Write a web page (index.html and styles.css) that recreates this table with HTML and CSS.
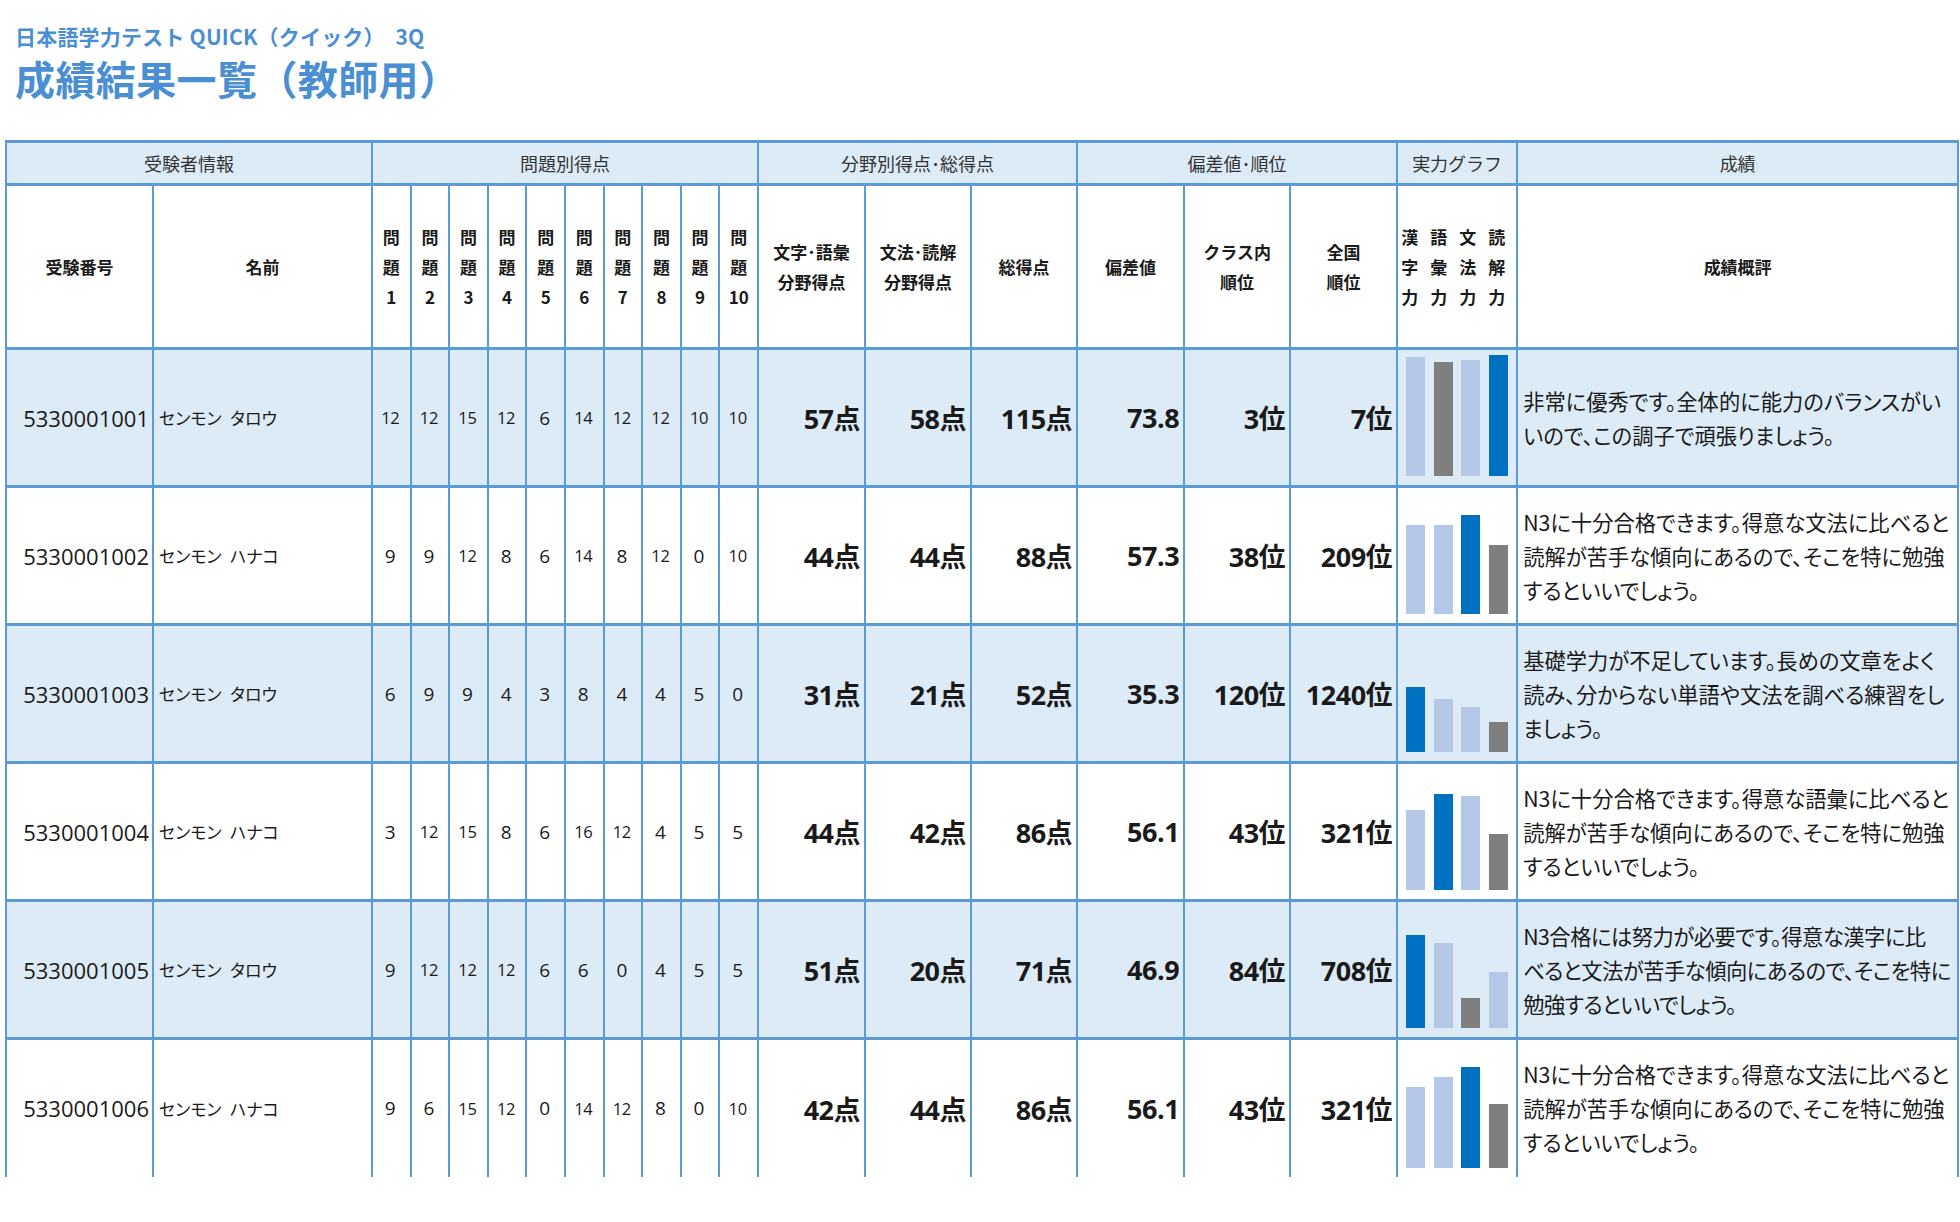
FILE: index.html
```html
<!DOCTYPE html>
<html lang="ja">
<head>
<meta charset="utf-8">
<title>成績結果一覧（教師用）</title>
<link rel="stylesheet" href="styles.css">
</head>
<body>
<header class="titles">
  <div class="subtitle">日本語学力テスト QUICK（クイック）　3Q</div>
  <h1 class="title">成績結果一覧（教師用）</h1>
</header>
<table class="grid">
  <colgroup>
    <col style="width:147px"><col style="width:219px">
    <col style="width:38.6px"><col style="width:38.6px"><col style="width:38.6px"><col style="width:38.6px"><col style="width:38.6px">
    <col style="width:38.6px"><col style="width:38.6px"><col style="width:38.6px"><col style="width:38.6px"><col style="width:38.6px">
    <col style="width:107px"><col style="width:106px"><col style="width:106px">
    <col style="width:107px"><col style="width:106px"><col style="width:107px">
    <col style="width:120px"><col style="width:441px">
  </colgroup>
  <thead>
    <tr class="group">
      <th colspan="2">受験者情報</th>
      <th colspan="10">問題別得点</th>
      <th colspan="3">分野別得点･総得点</th>
      <th colspan="3">偏差値･順位</th>
      <th>実力グラフ</th>
      <th>成績</th>
    </tr>
    <tr class="heads">
      <th>受験番号</th>
      <th>名前</th>
      <th class="qh">問<br>題<br>1</th>
      <th class="qh">問<br>題<br>2</th>
      <th class="qh">問<br>題<br>3</th>
      <th class="qh">問<br>題<br>4</th>
      <th class="qh">問<br>題<br>5</th>
      <th class="qh">問<br>題<br>6</th>
      <th class="qh">問<br>題<br>7</th>
      <th class="qh">問<br>題<br>8</th>
      <th class="qh">問<br>題<br>9</th>
      <th class="qh">問<br>題<br>10</th>
      <th class="two">文字･語彙<br>分野得点</th>
      <th class="two">文法･読解<br>分野得点</th>
      <th>総得点</th>
      <th>偏差値</th>
      <th class="two">クラス内<br>順位</th>
      <th class="two">全国<br>順位</th>
      <th class="gh">
        <div class="ghgrid">
          <span>漢</span><span>語</span><span>文</span><span>読</span>
          <span>字</span><span>彙</span><span>法</span><span>解</span>
          <span>力</span><span>力</span><span>力</span><span>力</span>
        </div>
      </th>
      <th>成績概評</th>
    </tr>
  </thead>
  <tbody>
    <tr class="odd">
      <td class="id">5330001001</td><td class="name">センモン&ensp;タロウ</td>
      <td class="q sm">12</td><td class="q sm">12</td><td class="q sm">15</td><td class="q sm">12</td><td class="q">6</td><td class="q sm">14</td><td class="q sm">12</td><td class="q sm">12</td><td class="q sm">10</td><td class="q sm">10</td>
      <td class="big">57点</td><td class="big">58点</td><td class="big">115点</td>
      <td class="big">73.8</td><td class="big">3位</td><td class="big">7位</td>
      <td class="graph"><div class="bars"><i class="bar light" style="height:119px"></i><i class="bar gray" style="height:114px"></i><i class="bar light" style="height:116px"></i><i class="bar dark" style="height:121px"></i></div></td>
      <td class="comment">非常に優秀です。全体的に能力のバランスがい<br>いので、この調子で頑張りましょう。</td>
    </tr>
    <tr>
      <td class="id">5330001002</td><td class="name">センモン&ensp;ハナコ</td>
      <td class="q">9</td><td class="q">9</td><td class="q sm">12</td><td class="q">8</td><td class="q">6</td><td class="q sm">14</td><td class="q">8</td><td class="q sm">12</td><td class="q">0</td><td class="q sm">10</td>
      <td class="big">44点</td><td class="big">44点</td><td class="big">88点</td>
      <td class="big">57.3</td><td class="big">38位</td><td class="big">209位</td>
      <td class="graph"><div class="bars"><i class="bar light" style="height:89px"></i><i class="bar light" style="height:89px"></i><i class="bar dark" style="height:99px"></i><i class="bar gray" style="height:69px"></i></div></td>
      <td class="comment">N3に十分合格できます。得意な文法に比べると<br>読解が苦手な傾向にあるので、そこを特に勉強<br>するといいでしょう。</td>
    </tr>
    <tr class="odd">
      <td class="id">5330001003</td><td class="name">センモン&ensp;タロウ</td>
      <td class="q">6</td><td class="q">9</td><td class="q">9</td><td class="q">4</td><td class="q">3</td><td class="q">8</td><td class="q">4</td><td class="q">4</td><td class="q">5</td><td class="q">0</td>
      <td class="big">31点</td><td class="big">21点</td><td class="big">52点</td>
      <td class="big">35.3</td><td class="big">120位</td><td class="big">1240位</td>
      <td class="graph"><div class="bars"><i class="bar dark" style="height:65px"></i><i class="bar light" style="height:53px"></i><i class="bar light" style="height:45px"></i><i class="bar gray" style="height:30px"></i></div></td>
      <td class="comment">基礎学力が不足しています。長めの文章をよく<br>読み、分からない単語や文法を調べる練習をし<br>ましょう。</td>
    </tr>
    <tr>
      <td class="id">5330001004</td><td class="name">センモン&ensp;ハナコ</td>
      <td class="q">3</td><td class="q sm">12</td><td class="q sm">15</td><td class="q">8</td><td class="q">6</td><td class="q sm">16</td><td class="q sm">12</td><td class="q">4</td><td class="q">5</td><td class="q">5</td>
      <td class="big">44点</td><td class="big">42点</td><td class="big">86点</td>
      <td class="big">56.1</td><td class="big">43位</td><td class="big">321位</td>
      <td class="graph"><div class="bars"><i class="bar light" style="height:80px"></i><i class="bar dark" style="height:96px"></i><i class="bar light" style="height:94px"></i><i class="bar gray" style="height:56px"></i></div></td>
      <td class="comment">N3に十分合格できます。得意な語彙に比べると<br>読解が苦手な傾向にあるので、そこを特に勉強<br>するといいでしょう。</td>
    </tr>
    <tr class="odd">
      <td class="id">5330001005</td><td class="name">センモン&ensp;タロウ</td>
      <td class="q">9</td><td class="q sm">12</td><td class="q sm">12</td><td class="q sm">12</td><td class="q">6</td><td class="q">6</td><td class="q">0</td><td class="q">4</td><td class="q">5</td><td class="q">5</td>
      <td class="big">51点</td><td class="big">20点</td><td class="big">71点</td>
      <td class="big">46.9</td><td class="big">84位</td><td class="big">708位</td>
      <td class="graph"><div class="bars"><i class="bar dark" style="height:93px"></i><i class="bar light" style="height:85px"></i><i class="bar gray" style="height:30px"></i><i class="bar light" style="height:56px"></i></div></td>
      <td class="comment tight">N3合格には努力が必要です。得意な漢字に比<br>べると文法が苦手な傾向にあるので、そこを特に<br>勉強するといいでしょう。</td>
    </tr>
    <tr class="last">
      <td class="id">5330001006</td><td class="name">センモン&ensp;ハナコ</td>
      <td class="q">9</td><td class="q">6</td><td class="q sm">15</td><td class="q sm">12</td><td class="q">0</td><td class="q sm">14</td><td class="q sm">12</td><td class="q">8</td><td class="q">0</td><td class="q sm">10</td>
      <td class="big">42点</td><td class="big">44点</td><td class="big">86点</td>
      <td class="big">56.1</td><td class="big">43位</td><td class="big">321位</td>
      <td class="graph"><div class="bars"><i class="bar light" style="height:81px"></i><i class="bar light" style="height:91px"></i><i class="bar dark" style="height:101px"></i><i class="bar gray" style="height:64px"></i></div></td>
      <td class="comment">N3に十分合格できます。得意な文法に比べると<br>読解が苦手な傾向にあるので、そこを特に勉強<br>するといいでしょう。</td>
    </tr>
  </tbody>
</table>
</body>
</html>
```
FILE: styles.css
```css
html, body {
  margin: 0;
  padding: 0;
  background: #ffffff;
}
body {
  padding: 0 3px 0 5px;
  font-family: "Noto Sans CJK JP", sans-serif;
  color: #1a1a1a;
  width: 1952px;
}

.titles {
  padding: 23px 0 0 10px;
  height: 117px;
  box-sizing: content-box;
  color: #4a8fd3;
}
.titles .subtitle {
  font-size: 21px;
  line-height: 26px;
  font-weight: 700;
  letter-spacing: 0.2px;
}
.titles .title {
  margin: 4px 0 0 0;
  font-size: 40px;
  line-height: 50px;
  font-weight: 700;
  letter-spacing: 0.4px;
}

.grid {
  border-collapse: collapse;
  table-layout: fixed;
  width: 1952px;
  margin-top: 0;
}
.grid th, .grid td {
  border-left: 2px solid #5b9bd5;
  border-right: 2px solid #5b9bd5;
  border-top: 3px solid #5b9bd5;
  border-bottom: 3px solid #5b9bd5;
  padding: 0;
  vertical-align: middle;
  overflow: hidden;
}

.group th {
  height: 40px;
  background: #ddebf7;
  font-weight: 400;
  font-size: 18px;
  color: #333;
  text-align: center;
}
.heads th {
  height: 161px;
  background: #ffffff;
  font-weight: 700;
  font-size: 17px;
  line-height: 30px;
  text-align: center;
  color: #1a1a1a;
}
.heads th.qh {
  font-size: 17px;
  line-height: 30px;
}
.heads th.gh {
  text-align: left;
  padding-left: 3px;
}
.ghgrid {
  display: grid;
  grid-template-columns: repeat(4, 29px);
  line-height: 30px;
  font-size: 17px;
}
.ghgrid span {
  text-align: left;
}

tbody tr {
  height: 138px;
}
tbody tr.odd td {
  background: #ddebf7;
}
tbody tr.last td {
  border-bottom: 0;
}

td.id {
  font-family: "Open Sans", "Noto Sans CJK JP", sans-serif;
  font-size: 22px;
  text-align: right;
  padding-right: 3px;
  color: #1a1a1a;
}
td.name {
  font-size: 17px;
  padding-left: 5px;
  font-feature-settings: "palt";
  white-space: nowrap;
}
td.q {
  font-family: "Open Sans", "Noto Sans CJK JP", sans-serif;
  font-size: 19px;
  text-align: center;
  padding-right: 2px;
}
td.q.sm {
  font-size: 16.5px;
  letter-spacing: -0.3px;
}
td.big {
  font-family: "Open Sans", "Noto Sans CJK JP", sans-serif;
  font-weight: 700;
  font-size: 27px;
  text-align: right;
  padding-right: 4px;
  letter-spacing: -0.5px;
  white-space: nowrap;
}
td.graph {
  vertical-align: bottom;
  padding: 0 0 9px 8px;
}
.bars {
  display: flex;
  align-items: flex-end;
  gap: 8.5px;
}
.bar {
  display: block;
  width: 19px;
}
.bar.light { background: #b4c7e7; }
.bar.gray { background: #7f7f7f; }
.bar.dark { background: #0070c0; }

td.comment {
  font-size: 21.3px;
  line-height: 34px;
  padding-left: 5px;
  white-space: nowrap;
  font-feature-settings: "palt";
  color: #1a1a1a;
}
td.comment.tight {
  letter-spacing: -0.5px;
}
```
